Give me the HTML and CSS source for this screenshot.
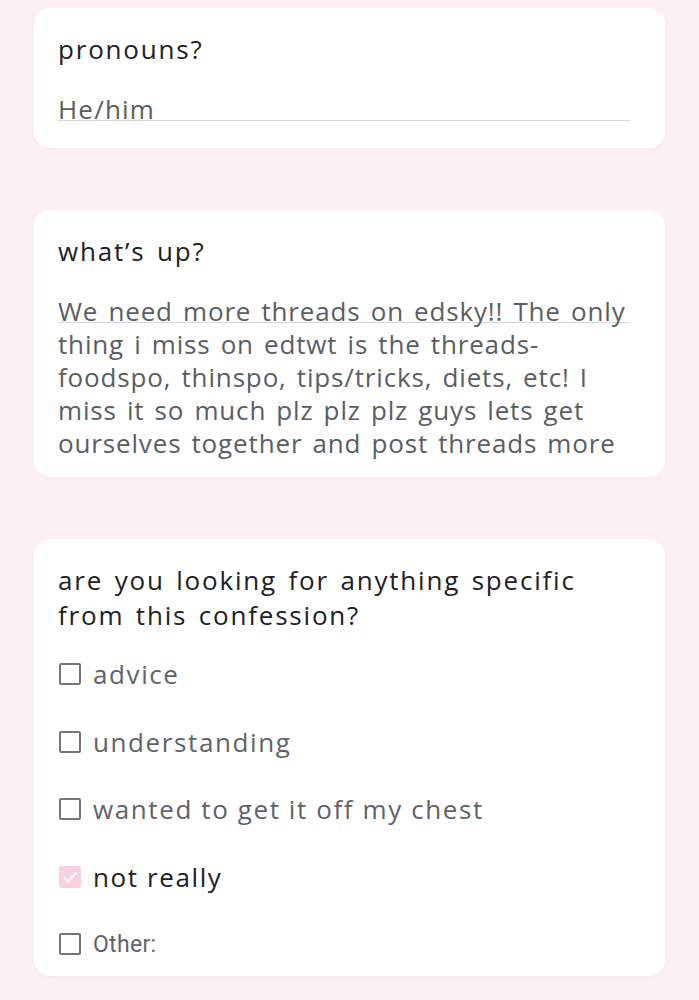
FILE: index.html
```html
<!DOCTYPE html>
<html lang="en">
<head>
    <meta charset="UTF-8">
    <meta name="viewport" content="width=device-width, initial-scale=1.0">
    <title>Confession Form</title>
    <link rel="stylesheet" href="styles.css">
</head>
<body>
    <div class="form">
        <div class="card card-short">
            <div class="question">pronouns?</div>
            <div class="answer">He/him</div>
        </div>

        <div class="card card-long">
            <div class="question">what’s up?</div>
            <div class="answer answer-long">We need more threads on edsky!! The only thing i miss on edtwt is the threads-foodspo, thinspo, tips/tricks, diets, etc! I miss it so much plz plz plz guys lets get ourselves together and post threads more</div>
        </div>

        <div class="card card-options">
            <div class="question">are you looking for anything specific from this confession?</div>
            <ul class="options">
                <li class="option"><span class="box"></span>advice</li>
                <li class="option"><span class="box"></span>understanding</li>
                <li class="option"><span class="box"></span>wanted to get it off my chest</li>
                <li class="option checked">
                    <span class="box">
                        <svg width="22" height="22" viewBox="0 0 22 22"><polyline points="5,11.5 9,15.5 17.5,6.5" fill="none" stroke="#fff" stroke-width="2"/></svg>
                    </span>not really
                </li>
                <li class="option other"><span class="box"></span>Other:</li>
            </ul>
        </div>
    </div>
</body>
</html>
```

FILE: styles.css
```css
body {
    margin: 0;
    background-color: #fdf0f5;
    font-family: "Open Sans", sans-serif;
    color: #202124;
}

.form {
    display: flex;
    flex-direction: column;
    gap: 62px;
    padding: 8px 34px 25px 34px;
}

.card {
    background-color: #fff;
    border-radius: 16px;
    padding: 24px 35px 20px 24px;
    box-shadow: 0 1px 4px rgba(0, 0, 0, 0.03);
}

.question {
    font-size: 26px;
    line-height: 35px;
    letter-spacing: 1.8px;
    word-spacing: 3px;
}

.answer {
    margin-top: 26px;
    font-size: 26px;
    line-height: 33px;
    letter-spacing: 1.2px;
    word-spacing: 2px;
    color: #5a5e63;
    /* underline sits under the first line only */
    background: linear-gradient(#d6d7da, #d6d7da) no-repeat 0 27px / 100% 1px;
}

/* the textarea text runs a little past the underline */
.answer-long {
    margin-right: -10px;
    letter-spacing: 0.85px;
    word-spacing: 2.5px;
    background-size: calc(100% - 10px) 1px;
}

.card-short {
    padding-bottom: 22px;
}

.card-long {
    padding-bottom: 17px;
}

.card-options {
    padding-bottom: 8px;
}

.options {
    list-style: none;
    margin: 17px 0 0 0;
    padding: 0;
    display: flex;
    flex-direction: column;
    gap: 19.5px;
}

.option {
    display: flex;
    align-items: center;
    gap: 12px;
    height: 48px;
    padding-left: 1px;
    font-size: 26px;
    letter-spacing: 1.6px;
    color: #5f6368;
}

.box {
    width: 22px;
    height: 22px;
    box-sizing: border-box;
    border: 2px solid #757575;
    border-radius: 2px;
    flex-shrink: 0;
}

.box svg {
    display: block;
}

.option.checked {
    color: #202124;
}

.option.checked .box {
    border: none;
    background-color: #f9d0e0;
}

.option.other {
    font-family: Roboto, sans-serif;
    font-size: 23px;
    letter-spacing: 0.3px;
}
```
